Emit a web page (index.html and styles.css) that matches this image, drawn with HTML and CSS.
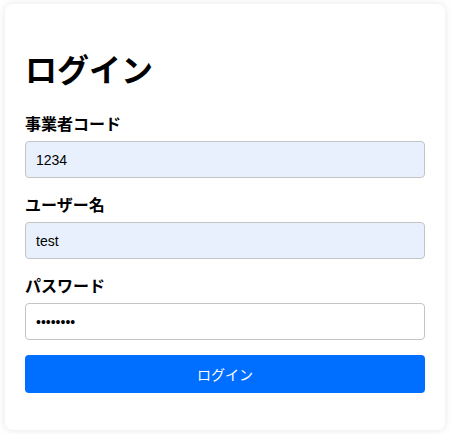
FILE: index.html
```html
<!DOCTYPE html>
<html lang="ja">
<head>
<meta charset="utf-8">
<title>ログイン</title>
<link rel="stylesheet" href="styles.css">
</head>
<body>
<div class="page">
  <div class="card">
    <h1 class="title">ログイン</h1>
    <form class="form">
      <div class="group">
        <label class="label" for="code">事業者コード</label>
        <input class="input filled" id="code" type="text" value="1234">
      </div>
      <div class="group">
        <label class="label" for="user">ユーザー名</label>
        <input class="input filled" id="user" type="text" value="test">
      </div>
      <div class="group">
        <label class="label" for="pass">パスワード</label>
        <input class="input" id="pass" type="password" value="password">
      </div>
      <button class="button" type="button">ログイン</button>
    </form>
  </div>
</div>
</body>
</html>
```

FILE: styles.css
```css
html, body {
  margin: 0;
  padding: 0;
  background: #ffffff;
}
body {
  font-family: "Liberation Sans", "Noto Sans CJK JP", sans-serif;
  color: #000;
}
.page {
  padding: 4px 7px 4px 5px;
}
.card {
  background: #fff;
  border-radius: 8px;
  box-shadow: 0 0 8px rgba(0, 0, 0, 0.1);
  padding: 20px 20px 37px;
}
.title {
  font-family: "Noto Sans CJK JP", sans-serif;
  font-size: 32px;
  font-weight: 700;
  margin: 21px 0 21px;
  line-height: 46px;
}
.form {
  display: flex;
  flex-direction: column;
}
.group {
  display: flex;
  flex-direction: column;
  margin-bottom: 15px;
}
.label {
  font-family: "Noto Sans CJK JP", sans-serif;
  font-size: 16px;
  font-weight: 700;
  line-height: 23px;
  margin-bottom: 6px;
}
.input {
  box-sizing: border-box;
  width: 100%;
  height: 37px;
  padding: 8px 10px;
  font-family: "Liberation Sans", sans-serif;
  font-size: 14px;
  border: 1px solid #c4c4c4;
  border-radius: 4px;
  background: #fff;
  color: #000;
  outline: none;
}
.input.filled {
  background: #e8f0fe;
}
.button {
  height: 38px;
  border: none;
  border-radius: 4px;
  background: #006fff;
  color: #fff;
  font-family: "Noto Sans CJK JP", sans-serif;
  font-size: 14px;
  cursor: pointer;
}
```
